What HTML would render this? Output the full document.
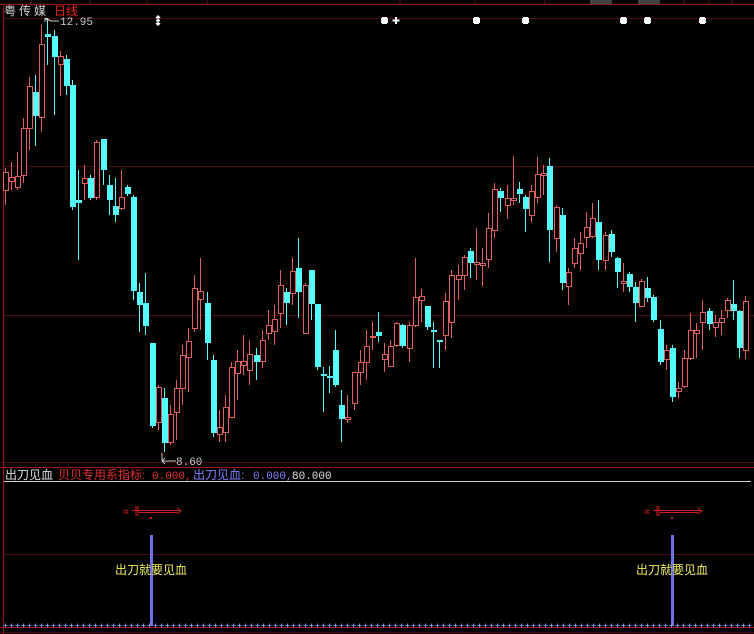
<!DOCTYPE html>
<html><head><meta charset="utf-8"><style>
html,body{margin:0;padding:0;background:#000;width:754px;height:634px;overflow:hidden}
svg{display:block}
.t{font-family:"Liberation Sans","Noto Sans CJK SC",sans-serif;font-size:12px}
.m{font-family:"Liberation Mono","Noto Sans CJK SC",monospace;font-size:11px}
</style></head><body>
<svg id="s" width="754" height="634" xmlns="http://www.w3.org/2000/svg">
<rect width="754" height="634" fill="#000"/>
<line x1="0" y1="4.5" x2="754" y2="4.5" stroke="#8a1a1a"/>
<g stroke="#6a1a1a"><line x1="31" y1="0" x2="31" y2="4"/><line x1="90" y1="0" x2="90" y2="4"/><line x1="147" y1="0" x2="147" y2="4"/><line x1="207" y1="0" x2="207" y2="4"/><line x1="400" y1="0" x2="400" y2="4"/><line x1="475" y1="0" x2="475" y2="4"/><line x1="545" y1="0" x2="545" y2="4"/><line x1="684" y1="0" x2="684" y2="4"/><line x1="709" y1="0" x2="709" y2="4"/><line x1="732" y1="0" x2="732" y2="4"/></g>
<rect x="590" y="0" width="22" height="4" fill="#444"/><rect x="638" y="0" width="22" height="4" fill="#444"/>
<line x1="3.5" y1="4" x2="3.5" y2="634" stroke="#8a1a1a"/>
<line x1="4" y1="18.5" x2="754" y2="18.5" stroke="#4a0c0c"/>
<line x1="4" y1="166.5" x2="754" y2="166.5" stroke="#4a0c0c"/>
<line x1="4" y1="315.5" x2="754" y2="315.5" stroke="#4a0c0c"/>
<line x1="0" y1="462.5" x2="754" y2="462.5" stroke="#4a0c0c"/>
<line x1="0" y1="467.5" x2="754" y2="467.5" stroke="#a01818"/>
<line x1="4" y1="481.5" x2="751" y2="481.5" stroke="#d0d0d0"/>
<line x1="4" y1="554.5" x2="754" y2="554.5" stroke="#4a0c0c"/>
<line x1="0" y1="627.5" x2="754" y2="627.5" stroke="#a01818"/>
<line x1="0" y1="632.5" x2="754" y2="632.5" stroke="#4a0c0c"/>
<text x="4" y="15" class="t" fill="#d8d8d8" letter-spacing="3">粤传媒</text>
<text x="54" y="15" class="t" fill="#f02020">日线</text>
<g id="c"></g>
<path d="M158 16v9M156 18l2-2 2 2M156 23l2 2 2-2M156 20.5h4" stroke="#fff" fill="none" stroke-width="1.5"/>
<g fill="#fff" id="mk"></g>
<path d="M396 17v7M392.5 20.5h7" stroke="#fff" stroke-width="2"/>
<path d="M48 21l-3 -3M45 18v4M45 18l6 3h8" stroke="#ccc" fill="none"/>
<text x="60" y="25" class="m" fill="#ccc">12.95</text>
<path d="M162 453v8h14M162 461l3 -3M162 461l3 3" stroke="#ccc" fill="none"/>
<text x="176" y="465" class="m" fill="#ccc">8.60</text>
<text x="5" y="479" class="t" fill="#e0e0e0">出刀见血</text>
<text x="58" y="479" class="t" fill="#e03030">贝贝专用系指标:</text>
<text x="152" y="479" class="m" fill="#e03030">0.000,</text>
<text x="193" y="479" class="t" fill="#8080ff">出刀见血:</text>
<text x="253" y="479" class="m" fill="#8080ff">0.000,</text>
<text x="292" y="479" class="m" fill="#e0e0e0">80.000</text>
<g id="sw"></g>
<rect x="150" y="535" width="3" height="91" fill="#7070e0"/>
<rect x="671" y="535" width="3" height="91" fill="#7070e0"/>
<text x="115" y="574" class="t" fill="#f0f060">出刀就要见血</text>
<text x="636" y="574" class="t" fill="#f0f060">出刀就要见血</text>
<g id="dots"></g>
</svg>
<script>
var d=[
[5,172,190,'r',168,205],[11,177,181,'r',162,190],[17,176,187,'r',152,190],[23,128,175,'r',118,183],[29,86,128,'r',77,150],[35,92,116,'c',75,146],[41,44,117,'r',25,132],[47,34,37,'c',18,65],[54,36,57,'c',30,115],[60,56,64,'r',51,96],[66,59,86,'c',55,95],[72,85,207,'c',80,210],[78,200,203,'c',170,260],[84,178,183,'r',165,200],[90,178,198,'c',175,200],[96,142,197,'r',140,200],[103,139,170,'c',139,185],[109,185,200,'c',175,215],[115,206,215,'c',178,222],[121,197,208,'r',170,210],[127,187,194,'c',185,196],[133,197,291,'c',195,300],[139,292,305,'c',283,332],[145,303,326,'c',273,335],[152,343,426,'c',343,428],[158,387,422,'r',385,430],[164,398,443,'c',388,452],[170,414,442,'r',405,445],[176,388,412,'r',380,440],[182,355,388,'r',345,405],[188,341,357,'r',328,392],[194,288,328,'r',275,332],[200,291,299,'r',258,330],[207,303,343,'c',292,360],[213,360,433,'c',355,437],[219,427,434,'r',410,442],[225,407,432,'r',395,442],[231,367,417,'r',362,418],[237,361,373,'r',350,400],[243,361,365,'r',335,375],[249,354,370,'r',340,385],[256,355,362,'c',348,380],[262,340,361,'r',330,368],[268,325,333,'r',310,340],[274,319,331,'r',305,345],[280,285,313,'r',270,328],[286,292,303,'c',288,325],[292,271,293,'r',258,305],[298,268,292,'c',238,318],[305,285,333,'r',283,333],[311,270,304,'c',270,320],[317,304,367,'c',304,370],[323,374,376,'c',367,412],[329,376,378,'c',366,393],[335,350,385,'c',330,387],[341,405,419,'c',390,442],[347,417,419,'r',395,423],[354,372,403,'r',372,410],[360,362,372,'r',350,385],[366,346,362,'r',330,380],[372,336,337,'r',322,350],[378,332,336,'c',312,342],[384,354,359,'r',343,372],[390,346,366,'r',340,367],[396,323,345,'r',322,347],[402,325,346,'c',324,348],[409,325,348,'r',322,362],[415,297,325,'r',258,327],[421,296,300,'r',289,322],[427,306,327,'c',306,330],[433,330,332,'c',322,368],[439,340,342,'c',340,368],[445,301,335,'r',293,350],[451,275,322,'r',270,338],[458,275,279,'r',265,300],[464,257,275,'r',255,290],[470,251,263,'c',248,278],[476,262,264,'r',228,280],[482,263,265,'r',248,286],[488,228,259,'r',213,268],[494,189,230,'r',183,238],[500,191,198,'c',188,212],[507,198,205,'r',185,219],[513,198,200,'r',156,205],[519,189,194,'c',182,203],[525,197,209,'c',195,232],[531,191,215,'r',185,222],[537,174,197,'r',157,203],[543,173,175,'r',165,195],[549,166,230,'c',158,262],[556,207,238,'r',205,252],[562,215,283,'c',208,290],[568,272,286,'r',268,305],[574,248,263,'r',238,268],[580,243,253,'r',232,270],[586,227,237,'r',212,248],[592,218,236,'r',203,238],[598,222,260,'c',200,270],[605,235,260,'r',232,270],[611,234,252,'c',230,257],[617,258,272,'c',257,288],[623,281,283,'r',263,292],[629,274,287,'c',272,292],[635,287,303,'c',282,322],[641,281,306,'r',279,307],[647,288,298,'c',277,302],[653,297,320,'c',295,322],[660,329,362,'c',320,365],[666,350,359,'r',345,370],[672,348,397,'c',345,402],[678,388,391,'r',382,398],[684,358,386,'r',350,388],[690,330,358,'r',313,360],[696,330,333,'r',323,358],[702,312,322,'r',300,350],[709,311,324,'c',308,330],[715,322,327,'r',315,337],[721,318,322,'r',310,335],[727,300,310,'r',298,318],[733,304,311,'c',280,320],[739,311,348,'c',310,358],[745,301,350,'r',296,359]];
var g=document.getElementById('c'),h='';
d.forEach(function(a){var x=a[0],t=a[1],b=a[2],r=a[3]=='r';
var col=r?'#e06060':'#54fcfc';
h+='<line x1="'+(x+.5)+'" y1="'+a[4]+'" x2="'+(x+.5)+'" y2="'+a[5]+'" stroke="'+col+'"/>';
if(r){h+='<rect x="'+(x-2+.5)+'" y="'+(t+.5)+'" width="5" height="'+Math.max(b-t,1)+'" fill="#000" stroke="'+col+'"/>';}
else{h+='<rect x="'+(x-2)+'" y="'+t+'" width="6" height="'+Math.max(b-t,2)+'" fill="'+col+'"/>';}
});
g.innerHTML=h;
var mk='';[384,476,525,623,647,702].forEach(function(x){mk+='<rect x="'+(x-3)+'" y="17" width="7" height="7" fill="#fff"/><rect x="'+(x-3)+'" y="17" width="1" height="1" fill="#000"/><rect x="'+(x+3)+'" y="17" width="1" height="1" fill="#000"/><rect x="'+(x-3)+'" y="23" width="1" height="1" fill="#000"/><rect x="'+(x+3)+'" y="23" width="1" height="1" fill="#000"/>';});
document.getElementById('mk').innerHTML=mk;
var sw='';[122,643].forEach(function(x){
sw+='<text x="'+x+'" y="515" font-family="Liberation Sans" font-size="11" fill="#d02020">∝</text>';
sw+='<path d="M'+(x+14)+' 506v10M'+(x+16)+' 506v10M'+(x+10)+' 510.5h48M'+(x+17)+' 512.5h38M'+(x+55)+' 508l4 3-4 3" stroke="#d02020" fill="none"/>';
sw+='<rect x="'+(x+28)+'" y="517" width="2" height="2" fill="#d02020"/>';});
document.getElementById('sw').innerHTML=sw;
var dt='';for(var x=5;x<754;x+=6){dt+='<path d="M'+(x-1.5)+' 625.5h4M'+(x+.5)+' 623.5v4" stroke="#8080e0"/>';}
document.getElementById('dots').innerHTML=dt;
</script>
</body></html>
